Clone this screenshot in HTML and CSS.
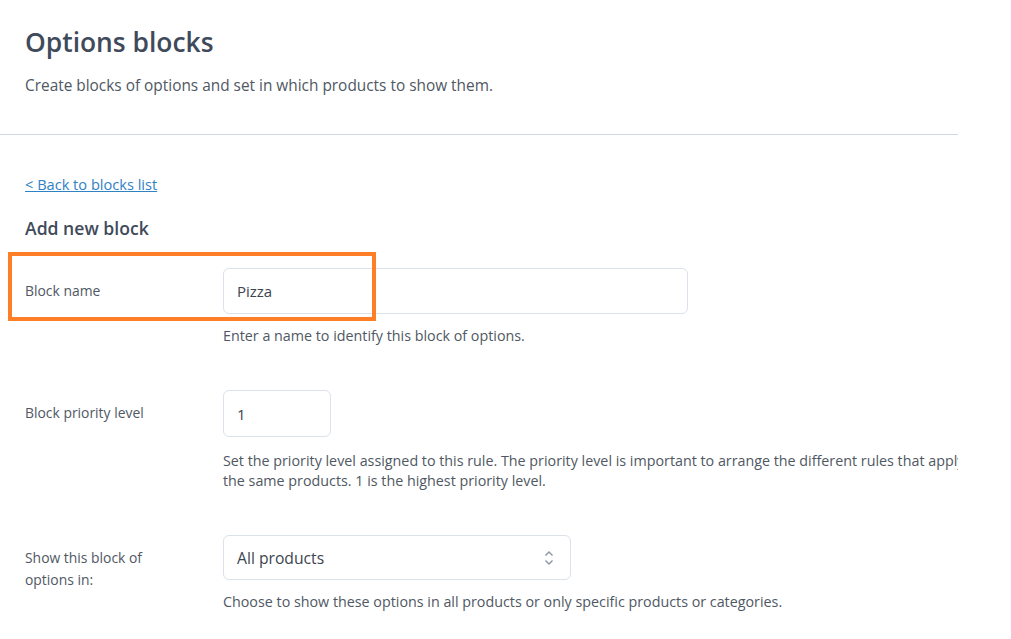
FILE: index.html
```html
<!DOCTYPE html>
<html lang="en">
<head>
    <meta charset="UTF-8">
    <title>Options blocks</title>
    <link rel="stylesheet" href="styles.css">
</head>
<body>

    <div class="page">

        <div class="header">
            <h1 class="title">Options blocks</h1>
            <p class="subtitle">Create blocks of options and set in which products to show them.</p>
        </div>

        <div class="content">

            <a class="back" href="#">&lt; Back to blocks list</a>

            <h2 class="section">Add new block</h2>

            <div class="row row-name">
                <label class="label">Block name</label>
                <div class="field">
                    <input class="input input-name" type="text" value="Pizza">
                    <p class="help">Enter a name to identify this block of options.</p>
                </div>
                <span class="highlight"></span>
            </div>

            <div class="row">
                <label class="label">Block priority level</label>
                <div class="field">
                    <input class="input input-priority" type="text" value="1">
                    <p class="help help-wide">Set the priority level assigned to this rule. The priority level is important to arrange the different rules that apply to the same products. 1 is the highest priority level.</p>
                </div>
            </div>

            <div class="row">
                <label class="label label-narrow">Show this block of options in:</label>
                <div class="field">
                    <div class="select">
                        <span>All products</span>
                        <svg class="chevrons" width="10" height="16" viewBox="0 0 10 16">
                            <path d="M1.5 5.5 L5 2 L8.5 5.5" fill="none" stroke="#8a94a3" stroke-width="1.4"/>
                            <path d="M1.5 10.5 L5 14 L8.5 10.5" fill="none" stroke="#8a94a3" stroke-width="1.4"/>
                        </svg>
                    </div>
                    <p class="help">Choose to show these options in all products or only specific products or categories.</p>
                </div>
            </div>

        </div>

    </div>

</body>
</html>
```

FILE: styles.css
```css
* {
    margin: 0px;
    padding: 0px;
    box-sizing: border-box;
}

body {
    background-color: #ffffff;
    font-family: "Open Sans", "Noto Sans", sans-serif;
    color: #50575e;
}

.page {
    width: 958px;
    overflow: hidden;
}

.header {
    padding: 24px 25px 0px 25px;
    height: 135px;
    border-bottom: 1px solid #cfd8e1;
}

.title {
    font-size: 26.4px;
    font-weight: 600;
    color: #3f4a5b;
    line-height: 36px;
}

.subtitle {
    margin-top: 15px;
    font-size: 15.4px;
    line-height: 22px;
    color: #4f5863;
}

.content {
    padding: 38px 25px 0px 25px;
}

.back {
    display: inline-block;
    font-size: 14.6px;
    line-height: 20px;
    color: #2f82c4;
    text-decoration: underline;
}

.section {
    margin-top: 21px;
    font-size: 17.6px;
    font-weight: 600;
    line-height: 24px;
    color: #3f4a5b;
}

.row {
    display: flex;
    position: relative;
    margin-top: 28px;
}

.row + .row {
    margin-top: 44px;
}

.label {
    width: 198px;
    flex: none;
    font-size: 13.9px;
    line-height: 22px;
    color: #4f5863;
    padding-top: 12px;
}

.label-narrow {
    width: 130px;
    margin-right: 68px;
}

.field {
    flex: none;
}

.input {
    display: block;
    height: 46px;
    padding: 0px 13px;
    border: 1px solid #dbe2ea;
    border-radius: 6px;
    font-family: inherit;
    font-size: 15px;
    color: #3c4550;
    background-color: #ffffff;
    outline: none;
}

.input-name {
    width: 465px;
}

.input-priority {
    width: 108px;
    height: 47px;
}

.select {
    width: 348px;
    height: 45px;
    padding: 0px 13px;
    border: 1px solid #dbe2ea;
    border-radius: 6px;
    display: flex;
    align-items: center;
    justify-content: space-between;
    font-size: 15.7px;
    color: #3c4550;
}

.chevrons {
    margin-right: 3px;
}

.help {
    margin-top: 12px;
    font-size: 14.3px;
    line-height: 20px;
    color: #4f5863;
}

.help-wide {
    width: 770px;
    margin-top: 14px;
}

.highlight {
    position: absolute;
    left: -17px;
    top: -16px;
    width: 368px;
    height: 69px;
    border: 4px solid #fe7f27;
}
```
